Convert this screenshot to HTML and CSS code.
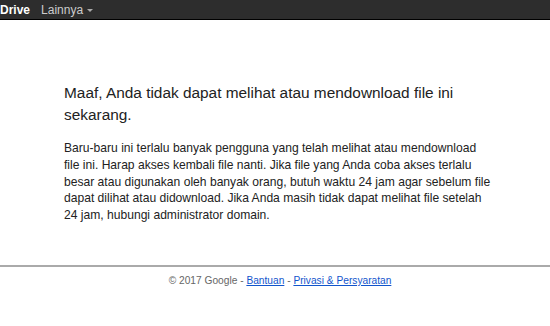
FILE: index.html
```html
<!DOCTYPE html>
<html lang="id">
<head>
<meta charset="utf-8">
<title>Google Drive</title>
<link rel="stylesheet" href="styles.css">
</head>
<body>
<div class="topbar">
  <span class="brand">Drive</span>
  <span class="menu">Lainnya <span class="caret"></span></span>
</div>
<main class="content">
  <h1 class="title">Maaf, Anda tidak dapat melihat atau mendownload file ini sekarang.</h1>
  <p class="desc">Baru-baru ini terlalu banyak pengguna yang telah melihat atau mendownload file ini. Harap akses kembali file nanti. Jika file yang Anda coba akses terlalu besar atau digunakan oleh banyak orang, butuh waktu 24 jam agar sebelum file dapat dilihat atau didownload. Jika Anda masih tidak dapat melihat file setelah 24 jam, hubungi administrator domain.</p>
</main>
<footer class="footer">
  <div class="footer-text">© 2017 Google - <a href="#">Bantuan</a> - <a href="#">Privasi &amp; Persyaratan</a></div>
</footer>
</body>
</html>
```
FILE: styles.css
```css
html, body {
  margin: 0;
  padding: 0;
  background: #fff;
  font-family: "Liberation Sans", Arial, sans-serif;
}
.topbar {
  height: 19px;
  background: #2d2d2d;
  border-bottom: 1px solid #000;
  display: flex;
  align-items: center;
  padding-left: 0;
  gap: 11px;
  font-size: 12px;
}
.brand {
  color: #fff;
  font-weight: bold;
}
.menu {
  color: #ccc;
  display: flex;
  align-items: center;
  gap: 4px;
}
.caret {
  width: 0;
  height: 0;
  border-left: 3px solid transparent;
  border-right: 3px solid transparent;
  border-top: 3px solid #aaa;
  margin-top: 1px;
}
.content {
  width: 428px;
  margin-left: 64px;
  padding-top: 62px;
  height: 183px;
}
.title {
  font-size: 15.4px;
  font-weight: normal;
  color: #222;
  line-height: 22px;
  margin: 0 0 14px 0;
}
.desc {
  font-size: 12.1px;
  line-height: 16.75px;
  color: #222;
  margin: 0;
}
.footer {
  border-top: 2px solid #aaa;
  text-align: center;
  padding-top: 8px;
  padding-left: 10px;
}
.footer-text {
  font-size: 10.2px;
  color: #666;
}
.footer-text a {
  color: #15c;
}
```
